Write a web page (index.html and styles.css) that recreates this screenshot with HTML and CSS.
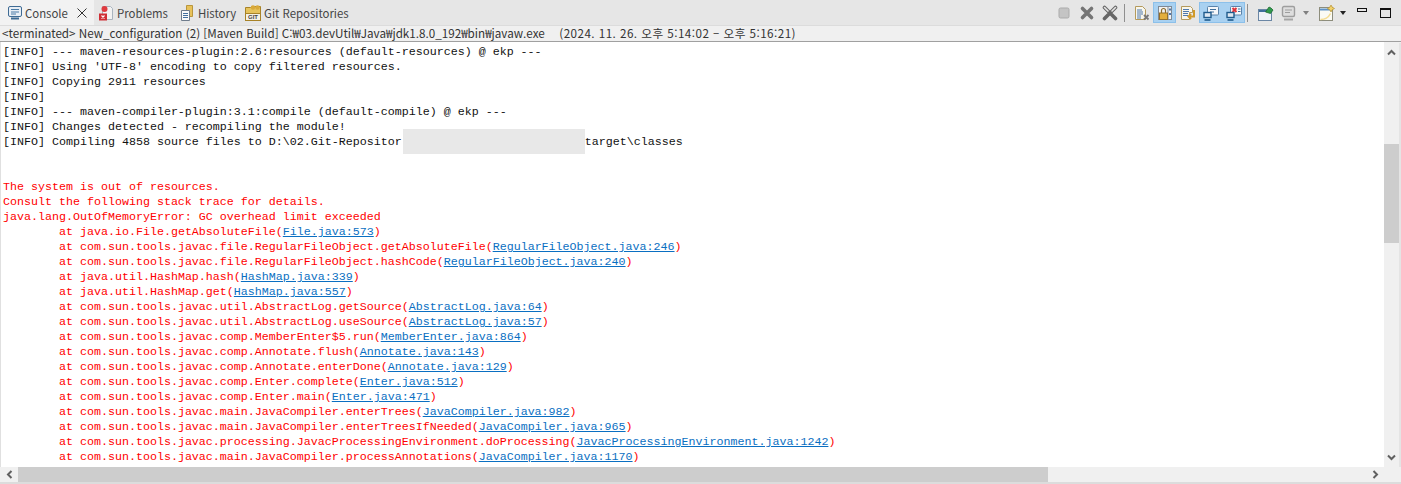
FILE: index.html
```html
<!DOCTYPE html>
<html lang="ko">
<head>
<meta charset="utf-8">
<title>Console</title>
<link rel="stylesheet" href="styles.css">
</head>
<body>
<div class="view">
  <header class="tabbar">
    <div class="tabs">
      <div class="tab active">
        <svg class="ico" viewBox="0 0 16 16"><rect x="1.5" y="1.5" width="13" height="10" rx="1.5" fill="#e8eef5" stroke="#3f6b94"/><path d="M4 4.5h8M4 7h8M4 9h5" stroke="#4a7ba6"/><path d="M4 13.5h8" stroke="#3f6b94" stroke-width="2"/></svg>
        <span>Console</span>
        <svg class="close" viewBox="0 0 10 10"><path d="M.5.5l9 9M9.500.5l-9 9" stroke="#333" fill="none"/></svg>
      </div>
      <div class="tab problems">
        <svg class="ico" viewBox="0 0 16 16"><path d="M4.500 1.500h8l2 2v11h-10z" fill="#f2f2f2" stroke="#a9b4bf"/><circle cx="6.500" cy="4" r="3" fill="#df3a3f"/><rect x="1" y="8.500" width="8" height="7" fill="#d02e35"/><path d="M3.500 10.500l3 3M6.500 10.500l-3 3" stroke="#fff" stroke-width="1.200"/></svg>
        <span>Problems</span>
      </div>
      <div class="tab history">
        <svg class="ico" viewBox="0 0 16 16"><path d="M7.500.5h6v11h-6z" fill="#e8c25a" stroke="#b9963c"/><path d="M2.500 5.500h8v10h-8z" fill="#fafafa" stroke="#6f7c8c"/><path d="M4 8.500h5M4 10.500h5M4 12.500h5" stroke="#44709f"/></svg>
        <span>History</span>
      </div>
      <div class="tab git">
        <svg class="ico" viewBox="0 0 16 16"><path d="M.5 2.500h5l1-1h9v13H.500z" fill="#e6c35c" stroke="#a88328"/><circle cx="8" cy="2.500" r="2.200" fill="#d9a93a"/><circle cx="12.500" cy="2.500" r="2.200" fill="#d9a93a"/><rect x=".5" y="8.500" width="15" height="7" fill="#f4f1e6" stroke="#a88328"/><text x="8" y="14.400" class="gittext">GIT</text></svg>
        <span>Git Repositories</span>
      </div>
    </div>
    <div class="tools">
      <svg class="tool" viewBox="0 0 16 16"><rect x="3" y="3" width="10" height="10" rx="1.500" fill="#c4c4c4" stroke="#ababab"/></svg>
      <svg class="tool" viewBox="0 0 16 16"><path d="M3.500 3.500l9 9M12.500 3.500l-9 9" stroke="#757575" stroke-width="3.600" stroke-linecap="round"/></svg>
      <svg class="tool" viewBox="0 0 16 16"><path d="M2.500 2.500l11 11M13.500 2.500l-11 11" stroke="#666" stroke-width="3.600" stroke-linecap="round"/><path d="M2.500 2.500l3.500 3.500M13.500 2.500l-3.500 3.500" stroke="#e4e4e4" stroke-width="1.600" stroke-linecap="round"/></svg>
      <i class="sep first"></i>
      <svg class="tool" viewBox="0 0 16 16"><path d="M1.500 1.500h7l3 3v10h-10z" fill="#f8f6ec" stroke="#b49a5c"/><path d="M3 5h5M3 7h6M3 9h6M3 11h4M3 13h4" stroke="#4f79ad"/><path d="M10 10l4.500 4.500M14.500 10L10 14.500" stroke="#777" stroke-width="1.800"/></svg>
      <span class="toggle"><svg class="tool" viewBox="0 0 16 16"><rect x="1.500" y="1.500" width="13" height="13" fill="#f2f2f2" stroke="#7f8a96"/><path d="M11 2v12" stroke="#7f8a96"/><rect x="12" y="3.500" width="2" height="2" fill="#4f79ad"/><rect x="12" y="8" width="2" height="2" fill="#4f79ad"/><path d="M4.500 8V5.500a2 2 0 0 1 4 0V8" fill="none" stroke="#8b6a2a" stroke-width="1.200"/><rect x="2.500" y="8" width="8" height="6.500" fill="#e3ae3c" stroke="#96702a"/></svg></span>
      <svg class="tool" viewBox="0 0 16 16"><path d="M1.500 1.500h9l2 2v4h-3v7h-8z" fill="#f8f6ec" stroke="#b49a5c"/><path d="M3 4.500h6M3 6.500h6M3 8.500h5M3 10.500h5" stroke="#4f79ad"/><path d="M14 5v6.500H8.500m2.500-2.500l-2.500 2.500 2.500 2.500" fill="none" stroke="#d19a2a" stroke-width="2"/></svg>
      <span class="toggle pair"><svg class="tool" viewBox="0 0 16 16"><rect x="4.500" y="1.500" width="11" height="8.500" rx="1" fill="#f5f7fa" stroke="#5a83aa"/><path d="M7 4.500h6M7 7h4" stroke="#3f6f9c"/><rect x="1" y="7.500" width="7" height="5" fill="#dfe8f2" stroke="#1f5a8c" stroke-width="1.400"/><path d="M1.500 15h6" stroke="#1f5a8c" stroke-width="1.600"/></svg><svg class="tool" viewBox="0 0 16 16"><rect x="4.500" y="1.500" width="11" height="8.500" rx="1" fill="#f5f7fa" stroke="#5a83aa"/><path d="M6.500 3l4 4M10.500 3l-4 4" stroke="#e0333a" stroke-width="2"/><path d="M12 4h2.500M12 6.500h2.500" stroke="#3f6f9c"/><rect x="1" y="7.500" width="7" height="5" fill="#dfe8f2" stroke="#1f5a8c" stroke-width="1.400"/><path d="M1.500 15h6" stroke="#1f5a8c" stroke-width="1.600"/></svg></span>
      <i class="sep second"></i>
      <svg class="tool" viewBox="0 0 16 16"><rect x=".5" y="4.500" width="13" height="11" fill="#eef2f7" stroke="#6b87a5"/><path d="M1 6h12" stroke="#3f6f9c" stroke-width="2"/><path d="M7.500 7l3.500-5 2 1 2 2-2.500 3.500z" fill="#2f9a4c" stroke="#1f6b32" stroke-width=".8"/></svg>
      <svg class="tool" viewBox="0 0 16 16"><rect x="1.500" y="1.500" width="12" height="10" rx="1.500" fill="#dedede" stroke="#9e9e9e" stroke-width="1.400"/><path d="M4 5h7M4 7.500h5" stroke="#9e9e9e"/><path d="M3 14.500h9" stroke="#a6a6a6" stroke-width="2"/></svg>
      <i class="drop muted"></i>
      <svg class="tool" viewBox="0 0 16 16"><rect x=".5" y="2.500" width="13" height="13" fill="#fbfbf4" stroke="#8d8d7c"/><path d="M1 4.500h12" stroke="#5f93c7" stroke-width="2"/><path d="M1.500 14.500c5 0 8-2 10-6" fill="none" stroke="#f4dc90" stroke-width="1.500"/><path d="M12 0l1 2 2.500 1.500-2.500 1.500-1 2-1-2-2.500-1.500 2.500-1.500z" fill="#f1d06a" stroke="#b8922e" stroke-width=".7"/></svg>
      <i class="drop"></i>
      <span class="min"></span>
      <span class="max"></span>
    </div>
  </header>
  <div class="status">&lt;terminated&gt; New_configuration (2) [Maven Build] C:₩03.devUtil₩Java₩jdk1.8.0_192₩bin₩javaw.exe&nbsp; <span class="date">(2024. 11. 26. 오후 5:14:02 – 오후 5:16:21)</span></div>
  <div class="console">
    <div class="output">
<pre class="line">[INFO] --- maven-resources-plugin:2.6:resources (default-resources) @ ekp ---</pre>
<pre class="line">[INFO] Using 'UTF-8' encoding to copy filtered resources.</pre>
<pre class="line">[INFO] Copying 2911 resources</pre>
<pre class="line">[INFO]</pre>
<pre class="line">[INFO] --- maven-compiler-plugin:3.1:compile (default-compile) @ ekp ---</pre>
<pre class="line">[INFO] Changes detected - recompiling the module!</pre>
<pre class="line">[INFO] Compiling 4858 source files to D:\02.Git-Repositor<span class="redact"></span>target\classes</pre>
<pre class="line"> </pre>
<pre class="line"> </pre>
<pre class="line err">The system is out of resources.</pre>
<pre class="line err">Consult the following stack trace for details.</pre>
<pre class="line err">java.lang.OutOfMemoryError: GC overhead limit exceeded</pre>
<pre class="line err">	at java.io.File.getAbsoluteFile(<a>File.java:573</a>)</pre>
<pre class="line err">	at com.sun.tools.javac.file.RegularFileObject.getAbsoluteFile(<a>RegularFileObject.java:246</a>)</pre>
<pre class="line err">	at com.sun.tools.javac.file.RegularFileObject.hashCode(<a>RegularFileObject.java:240</a>)</pre>
<pre class="line err">	at java.util.HashMap.hash(<a>HashMap.java:339</a>)</pre>
<pre class="line err">	at java.util.HashMap.get(<a>HashMap.java:557</a>)</pre>
<pre class="line err">	at com.sun.tools.javac.util.AbstractLog.getSource(<a>AbstractLog.java:64</a>)</pre>
<pre class="line err">	at com.sun.tools.javac.util.AbstractLog.useSource(<a>AbstractLog.java:57</a>)</pre>
<pre class="line err">	at com.sun.tools.javac.comp.MemberEnter$5.run(<a>MemberEnter.java:864</a>)</pre>
<pre class="line err">	at com.sun.tools.javac.comp.Annotate.flush(<a>Annotate.java:143</a>)</pre>
<pre class="line err">	at com.sun.tools.javac.comp.Annotate.enterDone(<a>Annotate.java:129</a>)</pre>
<pre class="line err">	at com.sun.tools.javac.comp.Enter.complete(<a>Enter.java:512</a>)</pre>
<pre class="line err">	at com.sun.tools.javac.comp.Enter.main(<a>Enter.java:471</a>)</pre>
<pre class="line err">	at com.sun.tools.javac.main.JavaCompiler.enterTrees(<a>JavaCompiler.java:982</a>)</pre>
<pre class="line err">	at com.sun.tools.javac.main.JavaCompiler.enterTreesIfNeeded(<a>JavaCompiler.java:965</a>)</pre>
<pre class="line err">	at com.sun.tools.javac.processing.JavacProcessingEnvironment.doProcessing(<a>JavacProcessingEnvironment.java:1242</a>)</pre>
<pre class="line err">	at com.sun.tools.javac.main.JavaCompiler.processAnnotations(<a>JavaCompiler.java:1170</a>)</pre>
    </div>
    <div class="vbar">
      <svg class="arrow" viewBox="0 0 9 7"><path d="M1 5.500l3.500-3.500 3.500 3.500" fill="none" stroke="#606060" stroke-width="2"/></svg>
      <div class="vtrack"><div class="vthumb"></div></div>
      <svg class="arrow" viewBox="0 0 9 7"><path d="M1 1.500l3.500 3.500 3.500-3.500" fill="none" stroke="#606060" stroke-width="2"/></svg>
    </div>
    <div class="hbar">
      <svg class="harrow" viewBox="0 0 7 9"><path d="M5.500 1L2 4.500 5.500 8" fill="none" stroke="#606060" stroke-width="2"/></svg>
      <div class="htrack"><div class="hthumb"></div></div>
      <svg class="harrow" viewBox="0 0 7 9"><path d="M1.500 1L5 4.500 1.500 8" fill="none" stroke="#606060" stroke-width="2"/></svg>
    </div>
  </div>
</div>
</body>
</html>
```
FILE: styles.css
```css
* { box-sizing: border-box; }
html, body { margin: 0; height: 100%; overflow: hidden; background: #fff; }
.view { width: 1401px; height: 484px; display: flex; flex-direction: column; font-family: "Noto Sans CJK KR", "Noto Sans", sans-serif; font-size: 12px; color: #333; background: #f0f0f0; }
.tabbar { height: 26px; flex: none; display: flex; justify-content: space-between; background: #e6e6e6; border-bottom: 1px solid #dcdcdc; font-size: 11.4px; }
.tabs { display: flex; }
.tab { display: flex; align-items: center; gap: 3px; height: 25px; color: #444; }
.tab.active { width: 94px; padding-left: 7px; gap: 2px; background: #f2f2f2; }
.tab.problems { margin-left: 4px; }
.tab.history { margin-left: 11px; }
.tab.git { margin-left: 9px; }
.ico { width: 16px; height: 16px; flex: none; }
.close { width: 10px; height: 10px; margin-left: 7px; }
.gittext { font: bold 6px "Liberation Sans", sans-serif; text-anchor: middle; fill: #444; }
.tools { display: flex; align-items: center; padding-right: 8px; }
.tool { width: 16px; height: 16px; flex: none; margin: 0 3.5px; display: block; }
.sep { width: 1px; height: 18px; background: #8f8f8f; flex: none; }
.sep.first { margin: 0 5px 0 2.500px; }
.sep.second { margin: 0 6px 0 2px; }
.toggle { display: flex; align-items: center; height: 21px; background: #a9d1f1; box-shadow: inset 0 0 0 1px #8cc0ea; }
.drop { width: 0; height: 0; border: 3.500px solid transparent; border-top: 4px solid #222; border-bottom: 0; margin: 0 6px 0 2px; flex: none; }
.drop.muted { border-top-color: #808080; margin: 0 6px 0 3px; }
.min { width: 10px; height: 4px; border: 1px solid #111; margin: 0 13px 5px 5px; flex: none; }
.max { width: 11px; height: 10px; border: 1px solid #111; border-top-width: 2px; margin: 0 2px 0 0; flex: none; }
.status { height: 15px; flex: none; line-height: 14px; padding-left: 2px; background: #f0f0f0; color: #333; white-space: pre; font-size: 11.67px; }
.date { letter-spacing: .45px; margin-left: 8px; }
.console { flex: 1; display: grid; grid-template-columns: 1fr 17px; grid-template-rows: 1fr 15px; border-top: 1px solid #a0a0a0; border-bottom: 2px solid #dcdcdc; background: #f0f0f0; min-height: 0; }
.output { background: #fff; overflow: hidden; padding: 3px 0 0 2px; border-left: 1px solid #e0e0e0; }
.line { margin: 0; height: 15px; font: 11.67px/15px "Liberation Mono", monospace; tab-size: 8; color: #111; white-space: pre; }
.err { color: #f00; }
.line a { color: #0a6fc2; text-decoration: underline; }
.redact { display: inline-block; width: 182px; height: 25px; margin: -6px 0 -6px 1px; vertical-align: middle; background: #e8e8e8; }
.vbar { display: flex; flex-direction: column; background: #f0f0f0; margin-top: 1px; border-right: 2px solid #e4e4e4; }
.arrow { width: 9px; height: 7px; margin: 6px auto; flex: none; }
.vtrack { flex: 1; padding-top: 82px; }
.vthumb { height: 99px; background: #cdcdcd; }
.hbar { grid-column: 1 / 3; display: flex; align-items: stretch; background: #f0f0f0; height: 15px; padding-right: 17px; }
.harrow { width: 7px; height: 9px; margin: 3px 5.500px; flex: none; }
.htrack { flex: 1; }
.hthumb { width: 1030px; height: 15px; background: #cdcdcd; }
```
